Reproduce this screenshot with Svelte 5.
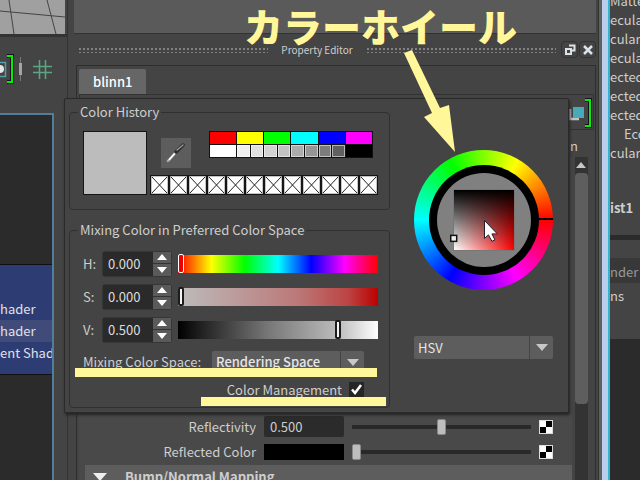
<script lang="ts">
  let sliders = $state([
    { id: 'hue', label: 'H:', text: '0.000', pos: 0 },
    { id: 'sat', label: 'S:', text: '0.000', pos: 0 },
    { id: 'val', label: 'V:', text: '0.500', pos: 81 },
  ]);

  let managed = $state(true);

  const colors = ['#ff0000', '#ffff00', '#00ff00', '#00ffff', '#0000ff', '#ff00ff'];
  const grays = ['#f0f0f0', '#e0e0e0', '#d2d2d2', '#c2c2c2', '#acacac', '#969696', '#7c7c7c', '#606060'];
  const slots = Array.from({ length: 12 }, (_, i) => i);

  const attrs = ['Matte', 'ecular', 'cular', 'ecular', 'ected', 'ected', 'ected', 'Eco', 'cular'];
</script>

<div class="app">
  <aside class="left">
    <svg class="viewport" viewBox="0 0 65 34" preserveAspectRatio="none" aria-hidden="true">
      <path d="M0 11 L65 17 M9 0 L14 34 M47 0 L56 34" />
    </svg>
    <div class="toolbar">
      <svg width="54" height="32" viewBox="0 0 54 32" aria-hidden="true">
        <path d="M-2 9.500H5.500V23.500H-2" fill="none" stroke="#4fa0ae" stroke-width="1.500" />
        <circle cx="0" cy="16" r="4" fill="#e6e6e6" />
        <path d="M7 3H12V29H7" fill="none" stroke="#1b1022" stroke-width="4" />
        <path d="M7 3H12V29H7" fill="none" stroke="#00f000" stroke-width="2" />
        <path d="M20.500 4V28" stroke="#777" />
        <path d="M20.500 10V22" stroke="#a5a5a5" stroke-width="3" />
        <path d="M39.500 7V26M45.500 7V26M33 13.500H52M33 19.500H52" stroke="#5aa883" stroke-width="1.500" />
      </svg>
    </div>
    <div class="outline">
      <ul>
        <li>hader</li>
        <li class="current">hader</li>
        <li>ent Shader</li>
      </ul>
    </div>
  </aside>

  <main class="editor">
    <div class="view-edge"></div>
    <header>
      <span class="grip"></span>
      <h1>Property Editor</h1>
      <span class="grip"></span>
      <div class="win">
        <button aria-label="Undock">
          <svg width="12" height="12" viewBox="0 0 12 12">
            <path d="M5 1.500H10.500V6.500H8" fill="none" stroke="#dbe3e6" stroke-width="2" />
            <rect x="2" y="5" width="5" height="5" fill="none" stroke="#dbe3e6" stroke-width="2" />
          </svg>
        </button>
        <button aria-label="Close">
          <svg width="12" height="12" viewBox="0 0 12 12">
            <path d="M2 2L10 10M10 2L2 10" stroke="#dbe3e6" stroke-width="2.500" />
          </svg>
        </button>
      </div>
    </header>

    <div class="frame">
      <button class="tab">blinn1</button>
      <div class="node">
        <svg width="26" height="32" viewBox="0 0 26 32" aria-hidden="true">
          <path d="M3 12V22H12" fill="none" stroke="#c3c3c3" stroke-width="2.500" />
          <rect x="6" y="10" width="11" height="11" fill="#49a9b8" />
          <path d="M18 3H23V29H18" fill="none" stroke="#1b1022" stroke-width="4" />
          <path d="M18 3H23V29H18" fill="none" stroke="#00f000" stroke-width="2" />
        </svg>
      </div>
      <div class="sub">n</div>
      <div class="scroll">
        <div class="attributes">
          <div class="attr">
            <label for="reflectivity">Reflectivity</label>
            <input id="reflectivity" class="number" type="text" value="0.500" />
            <input class="level" type="range" value="50" aria-label="Reflectivity level" />
            <button class="map" aria-label="Map reflectivity"></button>
          </div>
          <div class="attr">
            <label for="reflected">Reflected Color</label>
            <button id="reflected" class="chip" aria-label="Reflected Color"></button>
            <input class="level" type="range" value="0" aria-label="Reflected color level" />
            <button class="map" aria-label="Map reflected color"></button>
          </div>
          <button class="section">
            <svg width="14" height="8" viewBox="0 0 14 8"><path d="M0 0H14L7 8Z" fill="#eee" /></svg>
            Bump/Normal Mapping
          </button>
        </div>
        <div class="scrollbar">
          <svg width="12" height="16" viewBox="0 0 12 16"><path d="M1 11L6 5L11 11Z" fill="#c6c6c6" /></svg>
          <div class="thumb"></div>
        </div>
      </div>
    </div>

    <div class="popup" role="dialog" aria-label="Color picker">
      <div class="groups">
        <fieldset class="history">
          <legend>Color History</legend>
          <div class="swatch"></div>
          <div class="picks">
            <div class="pick-row">
              <button class="dropper" aria-label="Pick color">
                <svg width="20" height="20" viewBox="0 0 20 20">
                  <path d="M2 18L10 9" stroke="#aaa" stroke-width="2.500" stroke-linecap="round" />
                  <path d="M3 17L11 8" stroke="#fff" stroke-width="1.500" />
                  <path d="M10 9L17 2" stroke="#2b2b2b" stroke-width="3.500" stroke-linecap="round" />
                  <path d="M11 7L17 2" stroke="#999" stroke-width="1.500" stroke-linecap="round" />
                </svg>
              </button>
              <div class="palette">
                {#each colors as color}
                  <button class="wide" aria-label={color} style="background: {color}"></button>
                {/each}
                <button class="wide white" aria-label="white"></button>
                {#each grays as gray}
                  <button class="gray" aria-label={gray} style="background: {gray}"></button>
                {/each}
                <button class="wide black" aria-label="black"></button>
              </div>
            </div>
            <div class="slots">
              {#each slots as slot (slot)}
                <svg viewBox="0 0 19 20" preserveAspectRatio="none" aria-hidden="true">
                  <rect width="19" height="20" fill="#fff" />
                  <path d="M2 2L17 18M17 2L2 18" stroke="#222" />
                  <rect x=".5" y=".5" width="18" height="19" fill="none" stroke="#151515" stroke-width="1.500" />
                </svg>
              {/each}
            </div>
          </div>
        </fieldset>

        <fieldset class="mixing">
          <legend>Mixing Color in Preferred Color Space</legend>
          {#each sliders as s (s.id)}
            <div class="channel">
              <label for={s.id}>{s.label}</label>
              <div class="spin">
                <input id={s.id} type="text" bind:value={s.text} />
                <div class="steps">
                  <button aria-label="Increase {s.label}">
                    <svg width="10" height="6" viewBox="0 0 10 6"><path d="M0 6L5 0L10 6Z" fill="#fff" /></svg>
                  </button>
                  <button aria-label="Decrease {s.label}">
                    <svg width="10" height="6" viewBox="0 0 10 6"><path d="M0 0L5 6L10 0Z" fill="#fff" /></svg>
                  </button>
                </div>
              </div>
              <input class="ramp {s.id}" type="range" bind:value={s.pos} aria-label="{s.label} slider" />
            </div>
          {/each}
          <div class="option">
            <label for="space">Mixing Color Space:</label>
            <div class="select space">
              <select id="space"><option>Rendering Space</option><option>Display Space</option></select>
              <svg width="12" height="7" viewBox="0 0 12 7"><path d="M0 0H12L6 7Z" fill="#c8c8c8" /></svg>
            </div>
          </div>
          <div class="option check">
            <label for="managed">Color Management</label>
            <span class="box">
              <input id="managed" type="checkbox" bind:checked={managed} />
              {#if managed}
                <svg width="13" height="13" viewBox="0 0 13 13"><path d="M2 6.500L5 10L11 2" fill="none" stroke="#fff" stroke-width="2.500" /></svg>
              {/if}
            </span>
          </div>
        </fieldset>
      </div>

      <div class="wheel-side">
        <div class="wheel">
          <div class="ring">
            <div class="disc">
              <div class="square"></div>
            </div>
          </div>
          <svg class="marks" viewBox="0 0 140 140" aria-hidden="true">
            <path d="M124 69.500H140" stroke="#000" stroke-width="2" />
            <rect x="37" y="86" width="6" height="6" fill="#eee" stroke="#111" stroke-width="1.500" />
            <path d="M71 71V89L75 85.500L78.500 92L81.500 90.500L78.500 84.500H84Z" fill="#fff" stroke="#241c30" />
          </svg>
        </div>
        <div class="select model">
          <select aria-label="Color model"><option>HSV</option><option>RGB</option></select>
          <svg width="12" height="7" viewBox="0 0 12 7"><path d="M0 0H12L6 7Z" fill="#c8c8c8" /></svg>
        </div>
      </div>
    </div>
  </main>

  <aside class="right">
    <ul>
      {#each attrs as name}
        <li class:indent={name === 'Eco'}>{name}</li>
      {/each}
    </ul>
    <div class="list-name">ist1</div>
    <div class="render">nder</div>
    <div class="menu">ns</div>
    <div class="rest"></div>
  </aside>

  <p class="callout">カラーホイール</p>
  <svg class="notes" width="640" height="480" viewBox="0 0 640 480" aria-hidden="true">
    <path d="M404 53L412 50L440 108L449 105L455 152L424 117L432 113Z" />
    <rect x="75" y="368" width="302" height="9" />
    <rect x="201" y="397" width="185" height="9" />
  </svg>
</div>

<style>
  :global(body) {
    margin: 0;
    background: #444;
  }

  .app {
    position: relative;
    display: flex;
    height: 100vh;
    overflow: hidden;
    background: #444;
    color: #cecece;
    font: 13px/18px "Noto Sans CJK JP", "Open Sans", sans-serif;
  }

  .app * {
    box-sizing: border-box;
  }

  button,
  input,
  select {
    margin: 0;
    padding: 0;
    border: 0;
    border-radius: 0;
    background: none;
    color: inherit;
    font: inherit;
  }

  svg {
    display: block;
  }

  ul {
    margin: 0;
    padding: 0;
    list-style: none;
  }

  .left {
    flex: 0 0 68px;
    display: flex;
    flex-direction: column;
    border-right: 1px solid #333;
  }

  .viewport {
    width: 65px;
    height: 34px;
    background: #a0a0a0;
  }

  .viewport path {
    stroke: #444;
    fill: none;
  }

  .toolbar {
    height: 79px;
    padding-top: 16px;
    border-top: 3px solid #333;
  }

  .outline {
    flex: 1;
    width: 54px;
    padding-top: 149px;
    overflow: hidden;
    border-top: 2px solid #527d9b;
    border-right: 2px solid #527d9b;
    background: #2b2b2b;
  }

  .outline ul {
    height: 111px;
    padding-top: 33px;
    border-top: 1px solid #111;
    border-bottom: 1px solid #111;
    background: #2d3c72;
    color: #e0e0e6;
  }

  .outline li {
    height: 22px;
    line-height: 22px;
    white-space: nowrap;
  }

  .outline .current {
    background: #404b79;
  }

  .editor {
    position: relative;
    flex: 1;
    min-width: 0;
    display: flex;
    flex-direction: column;
    padding: 0 2px 0 6px;
  }

  .view-edge {
    height: 34px;
    border-bottom: 1px solid #333;
    background: #5a5a5a;
  }

  header {
    display: flex;
    align-items: center;
    gap: 13px;
    height: 31px;
    padding-left: 4px;
  }

  .grip {
    flex: 1;
    height: 6px;
    background: radial-gradient(circle, #828282 1px, transparent 1px) 0 0 / 4px 4px;
  }

  h1 {
    margin: 0;
    font-size: 10px;
    font-weight: 400;
  }

  .win {
    display: flex;
    gap: 1px;
    margin-left: -8px;
  }

  .win button {
    display: grid;
    place-items: center;
    width: 17px;
    height: 17px;
    border: 1px solid #333;
    border-radius: 4px;
  }

  .frame {
    flex: 1;
    min-height: 0;
    display: flex;
    flex-direction: column;
    margin-left: 2px;
    border: 1px solid #2e2e2e;
    border-bottom: 0;
    padding: 3px 1px 0 2px;
  }

  .tab {
    align-self: flex-start;
    height: 25px;
    padding: 0 14px;
    border-radius: 2px 2px 0 0;
    background: #666;
    color: #fff;
    font-weight: 500;
  }

  .node {
    display: flex;
    justify-content: flex-end;
    height: 36px;
    padding-top: 2px;
    border: 1px solid #333;
  }

  .sub {
    height: 27px;
    padding-top: 7px;
    padding-right: 16px;
    text-align: right;
  }

  .scroll {
    flex: 1;
    min-height: 0;
    display: flex;
    gap: 3px;
    padding-right: 6px;
  }

  .attributes {
    flex: 1;
    display: flex;
    flex-direction: column;
    justify-content: flex-end;
    padding-left: 6px;
    background: #494949;
  }

  .attr {
    display: grid;
    grid-template-columns: 171px 80px 1fr 14px;
    align-items: center;
    column-gap: 8px;
    height: 25px;
    padding-right: 19px;
  }

  .attr label {
    text-align: right;
  }

  .number {
    width: 100%;
    height: 21px;
    padding: 0 6px;
    border-radius: 2px;
    background: #2b2b2b;
  }

  .chip {
    height: 16px;
    background: #000;
  }

  .level {
    appearance: none;
    width: 100%;
    height: 16px;
    background: linear-gradient(#292929, #292929) center / 100% 4px no-repeat;
  }

  .level::-webkit-slider-thumb {
    appearance: none;
    width: 9px;
    height: 16px;
    border: 1px solid #888;
    border-radius: 2px;
    background: #bdbdbd;
  }

  .map {
    width: 14px;
    height: 14px;
    border: 1px solid #ddd;
    background: conic-gradient(#000 25%, #fff 0 50%, #000 0 75%, #fff 0);
  }

  .section {
    display: flex;
    align-items: center;
    gap: 18px;
    height: 24px;
    margin-top: 1px;
    margin-bottom: -9px;
    padding: 0 8px;
    background: #5d5d5d;
    font-weight: 700;
  }

  .scrollbar {
    width: 13px;
    background: #333;
  }

  .thumb {
    height: 231px;
    border-radius: 4px;
    background: #5e5e5e;
  }

  .popup {
    position: absolute;
    top: 98px;
    left: -4px;
    right: 29px;
    display: flex;
    gap: 24px;
    padding: 4px 15px 4px 4px;
    border: 1px solid #2a2a2a;
    border-radius: 2px;
    background: #444;
    box-shadow: 1px 2px 3px #222;
  }

  .groups {
    flex: 1;
  }

  fieldset {
    min-width: 0;
    margin: 0;
    border: 1px solid #303030;
    border-radius: 4px;
  }

  legend {
    margin-left: -5px;
    padding: 0 2px;
  }

  .history {
    display: flex;
    gap: 3px;
    padding: 10px 11px 14px 13px;
  }

  .swatch {
    width: 64px;
    height: 64px;
    border: 1px solid #151515;
    background: #bcbcbc;
  }

  .picks {
    flex: 1;
    display: flex;
    flex-direction: column;
    justify-content: space-between;
  }

  .pick-row {
    display: flex;
    align-items: flex-start;
    gap: 18px;
    padding: 0 5px 0 11px;
  }

  .dropper {
    display: grid;
    place-items: center;
    width: 30px;
    height: 30px;
    margin-top: 7px;
    background: #5d5d5d;
  }

  .palette {
    flex: 1;
    display: grid;
    grid-template-columns: repeat(12, 1fr);
    grid-auto-rows: 12px;
    gap: 1px;
    padding: 1px;
    background: #111;
  }

  .wide {
    grid-column: span 2;
  }

  .white {
    background: #fff;
  }

  .black {
    background: #000;
  }

  .gray {
    border: 1px solid #fff8;
  }

  .slots {
    display: flex;
  }

  .slots svg {
    flex: 1;
    min-width: 0;
    height: 20px;
  }

  .mixing {
    margin-top: 11px;
    padding: 8px 11px 6px 13px;
  }

  .channel {
    display: flex;
    align-items: center;
    height: 33px;
  }

  .channel label {
    width: 19px;
  }

  .spin {
    display: flex;
    width: 70px;
    height: 26px;
    margin-right: 6px;
    border: 1px solid #363636;
    border-radius: 3px;
  }

  .spin input {
    flex: 1;
    min-width: 0;
    padding: 0 5px;
    background: #2a2a2a;
    color: #ddd;
  }

  .steps {
    display: flex;
    flex-direction: column;
    gap: 1px;
    width: 18px;
    background: #333;
  }

  .steps button {
    flex: 1;
    display: grid;
    place-items: center;
    background: #5a5a5a;
  }

  .ramp {
    appearance: none;
    flex: 1;
    min-width: 0;
    height: 18px;
  }

  .ramp::-webkit-slider-thumb {
    appearance: none;
    width: 6px;
    height: 19px;
    border: 2px solid #1c1c1c;
    border-radius: 2px;
    background: #f4f4f4;
  }

  .hue::-webkit-slider-thumb {
    border-color: #fff;
    background: #e00;
    border-width: 1px;
  }

  .hue {
    background: linear-gradient(90deg, #f00, #ff0, #0f0, #0ff, #00f, #f0f, #f00);
  }

  .sat {
    background: linear-gradient(90deg, #bcbcbc, #bc7878 60%, #bc4444 85%, #bc0000);
  }

  .val {
    background: linear-gradient(90deg, #000, #222 12%, #777 45%, #bcbcbc 80%, #fff);
  }

  .option {
    display: flex;
    align-items: center;
    justify-content: space-between;
    height: 32px;
    padding-right: 14px;
  }

  .check {
    justify-content: flex-end;
    gap: 7px;
    height: 23px;
  }

  .select {
    display: grid;
    height: 23px;
    border-radius: 2px;
    background: linear-gradient(90deg, #5d5d5d calc(100% - 24px), #444 0 calc(100% - 23px), #5d5d5d 0);
  }

  .space {
    width: 152px;
  }

  .space select {
    font-weight: 500;
  }

  .select select {
    grid-area: 1 / 1;
    appearance: none;
    padding: 0 4px;
    color: #e6e6e6;
  }

  .select svg {
    grid-area: 1 / 1;
    place-self: center end;
    margin-right: 5px;
    pointer-events: none;
  }

  .box {
    display: grid;
    place-items: center;
    width: 15px;
    height: 15px;
    background: #252525;
  }

  .box input,
  .box svg {
    grid-area: 1 / 1;
  }

  .box input {
    appearance: none;
    width: 15px;
    height: 15px;
  }

  .box svg {
    pointer-events: none;
  }

  .wheel-side {
    display: flex;
    flex-direction: column;
    gap: 46px;
    width: 140px;
    padding-top: 47px;
  }

  .wheel {
    position: relative;
    display: grid;
    place-items: center;
    height: 140px;
    border-radius: 50%;
    background: conic-gradient(from 90deg, #f00, #f0f, #00f, #0ff, #0f0, #ff0, #f00);
  }

  .ring {
    width: 110px;
    height: 110px;
    padding: 8px;
    border-radius: 50%;
    background: #000;
  }

  .disc {
    display: grid;
    place-items: center;
    height: 100%;
    border-radius: 50%;
    background: #808080;
  }

  .square {
    width: 62px;
    height: 62px;
    border: 1px solid #777;
    background:
      linear-gradient(#000, #0000),
      linear-gradient(90deg, #fff, #f00);
  }

  .marks {
    position: absolute;
    inset: 0;
  }

  .right {
    flex: 0 0 42px;
    display: flex;
    flex-direction: column;
    overflow: hidden;
    padding-left: 12px;
    background: linear-gradient(90deg, #333 1px, #606060 0 4px, #b9cfeb 0 10px, #35b4cf 0 12px, #444 0);
  }

  .right ul {
    height: 201px;
    margin-top: -9px;
  }

  .right li {
    height: 19px;
    line-height: 19px;
  }

  .right .indent {
    padding-left: 14px;
  }

  .list-name {
    height: 43px;
    padding-top: 7px;
    font-weight: 700;
    line-height: 18px;
  }

  .render {
    height: 48px;
    padding-top: 23px;
    border-top: 5px solid #2b2b2b;
    background: linear-gradient(#444 18px, #383838 0);
    color: #999;
  }

  .menu {
    height: 56px;
    padding-top: 4px;
  }

  .rest {
    flex: 1;
    background: #2b2b2b;
  }

  .callout {
    position: absolute;
    top: 0;
    left: 244px;
    margin: 0;
    color: #fff799;
    font-size: 39px;
    font-weight: 900;
    line-height: 50px;
    white-space: nowrap;
  }

  .notes {
    position: absolute;
    top: 0;
    left: 0;
    fill: #fff799;
    pointer-events: none;
  }
</style>
